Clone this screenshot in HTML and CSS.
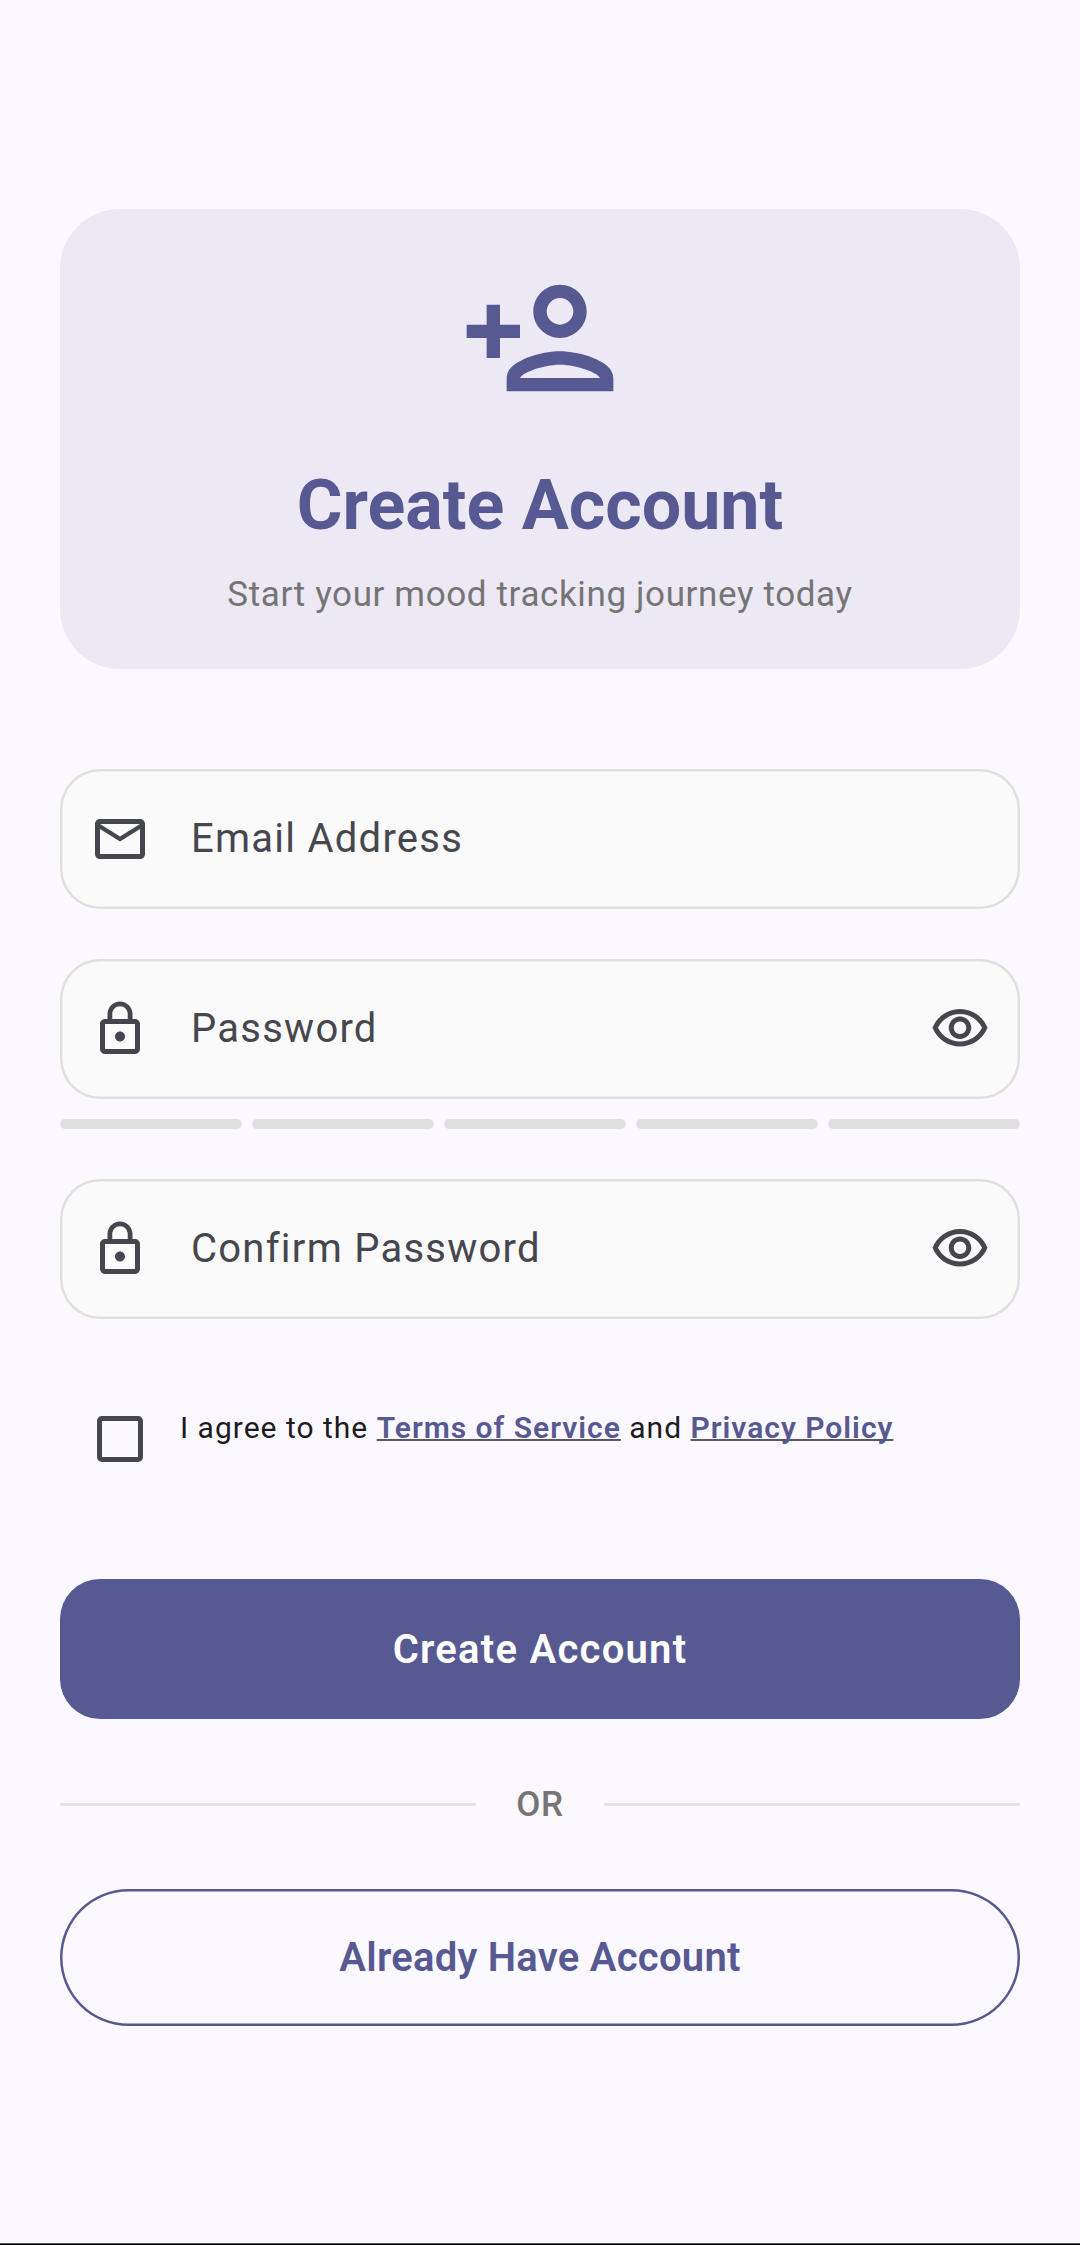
FILE: index.html
```html
<!DOCTYPE html>
<html lang="en">
<head>
<meta charset="utf-8">
<title>Create Account</title>
<link rel="stylesheet" href="styles.css">
</head>
<body>
<main class="screen">
  <header class="hero">
    <svg class="hero-icon" viewBox="0 0 24 24"><path fill-rule="evenodd" d="M15 12c2.21 0 4-1.79 4-4s-1.79-4-4-4-4 1.79-4 4 1.79 4 4 4zm0-6c1.1 0 2 .9 2 2s-.9 2-2 2-2-.9-2-2 .9-2 2-2zm0 8c-2.67 0-8 1.34-8 4v2h16v-2c0-2.66-5.33-4-8-4zm-6 4c.22-.72 3.31-2 6-2 2.7 0 5.8 1.29 6 2H9zM6 15v-3h3v-2H6V7H4v3H1v2h3v3z"/></svg>
    <h1 class="title">Create Account</h1>
    <p class="subtitle">Start your mood tracking journey today</p>
  </header>

  <form class="form">
    <div class="field">
      <svg class="icon" viewBox="0 0 24 24"><path d="M22 6c0-1.1-.9-2-2-2H4c-1.1 0-2 .9-2 2v12c0 1.1.9 2 2 2h16c1.1 0 2-.9 2-2V6zm-2 0l-8 5-8-5h16zm0 12H4V8l8 5 8-5v10z"/></svg>
      <span class="label">Email Address</span>
    </div>

    <div class="field password">
      <svg class="icon" viewBox="0 0 24 24"><path d="M12 17c1.1 0 2-.9 2-2s-.9-2-2-2-2 .9-2 2 .9 2 2 2zm6-9h-1V6c0-2.76-2.24-5-5-5S7 3.24 7 6v2H6c-1.1 0-2 .9-2 2v10c0 1.1.9 2 2 2h12c1.1 0 2-.9 2-2V10c0-1.1-.9-2-2-2zM8.9 6c0-1.71 1.39-3.1 3.1-3.1s3.1 1.39 3.1 3.1v2H8.9V6zM18 20H6V10h12v10z"/></svg>
      <span class="label">Password</span>
      <svg class="icon" viewBox="0 0 24 24"><path d="M12 6c3.79 0 7.17 2.13 8.82 5.5C19.17 14.87 15.79 17 12 17s-7.17-2.13-8.82-5.5C4.83 8.13 8.21 6 12 6m0-2C7 4 2.73 7.11 1 11.5 2.73 15.89 7 19 12 19s9.27-3.11 11-7.5C21.27 7.11 17 4 12 4zm0 5c1.38 0 2.5 1.12 2.5 2.5S13.38 14 12 14s-2.5-1.12-2.5-2.5S10.62 9 12 9m0-2c-2.48 0-4.5 2.02-4.5 4.5S9.52 16 12 16s4.5-2.02 4.5-4.5S14.48 7 12 7z"/></svg>
    </div>
    <div class="strength"><i></i><i></i><i></i><i></i><i></i></div>

    <div class="field confirm">
      <svg class="icon" viewBox="0 0 24 24"><path d="M12 17c1.1 0 2-.9 2-2s-.9-2-2-2-2 .9-2 2 .9 2 2 2zm6-9h-1V6c0-2.76-2.24-5-5-5S7 3.24 7 6v2H6c-1.1 0-2 .9-2 2v10c0 1.1.9 2 2 2h12c1.1 0 2-.9 2-2V10c0-1.1-.9-2-2-2zM8.9 6c0-1.71 1.39-3.1 3.1-3.1s3.1 1.39 3.1 3.1v2H8.9V6zM18 20H6V10h12v10z"/></svg>
      <span class="label">Confirm Password</span>
      <svg class="icon" viewBox="0 0 24 24"><path d="M12 6c3.79 0 7.17 2.13 8.82 5.5C19.17 14.87 15.79 17 12 17s-7.17-2.13-8.82-5.5C4.83 8.13 8.21 6 12 6m0-2C7 4 2.73 7.11 1 11.5 2.73 15.89 7 19 12 19s9.27-3.11 11-7.5C21.27 7.11 17 4 12 4zm0 5c1.38 0 2.5 1.12 2.5 2.5S13.38 14 12 14s-2.5-1.12-2.5-2.5S10.62 9 12 9m0-2c-2.48 0-4.5 2.02-4.5 4.5S9.52 16 12 16s4.5-2.02 4.5-4.5S14.48 7 12 7z"/></svg>
    </div>

    <div class="terms">
      <span class="checkbox" role="checkbox" aria-checked="false"></span>
      <p class="terms-text">I agree to the <a class="link">Terms of Service</a> and <a class="link">Privacy Policy</a></p>
    </div>

    <button class="btn primary" type="button">Create Account</button>
    <div class="divider"><span class="or">OR</span></div>
    <button class="btn outlined" type="button">Already Have Account</button>
  </form>
  <footer class="nav-edge"></footer>
</main>
</body>
</html>
```

FILE: styles.css
```css
* { box-sizing: border-box; }
body {
  margin: 0;
  background: #fbf8ff;
  font-family: Roboto, sans-serif;
}
.screen {
  display: flex;
  flex-direction: column;
  height: 2245px;
  padding: 209px 60px 0;
}
.hero {
  display: flex;
  flex-direction: column;
  align-items: center;
  height: 460px;
  padding-top: 49px;
  border-radius: 60px;
  background: #ece9f4;
}
.hero-icon { width: 160px; height: 160px; fill: #575992; }
.title {
  margin: 42px 0 0;
  font-size: 70px;
  line-height: 90px;
  font-weight: 700;
  color: #575992;
}
.subtitle {
  margin: 20px 0 0;
  font-size: 35px;
  line-height: 50px;
  letter-spacing: 0.625px;
  color: #757575;
}
.form { display: flex; flex-direction: column; margin-top: 100px; }
.field {
  display: flex;
  align-items: center;
  height: 140px;
  padding: 0 30px 1px;
  border-radius: 40px;
  background: #fafafa;
  box-shadow: inset 0 0 0 2.5px #e0e0e0;
}
.icon { width: 60px; height: 60px; fill: #46464f; }
.label {
  flex: 1;
  margin-left: 41px;
  font-size: 40px;
  line-height: 60px;
  letter-spacing: 1.25px;
  color: #46464f;
}
.password { margin-top: 50px; }
.strength { display: flex; margin-top: 20px; }
.strength i {
  width: 182px;
  height: 10px;
  margin-right: 10px;
  border-radius: 5px;
  background: #e0e0e0;
}
.strength i:last-child { width: 192px; margin-right: 0; }
.confirm { margin-top: 50px; }
.terms { display: flex; align-items: flex-start; height: 160px; margin-top: 60px; padding: 37px 0 0 37px; }
.checkbox {
  width: 46px;
  height: 46px;
  border: 5px solid #46464f;
  border-radius: 5px;
}
.terms-text {
  margin: -8px 0 0 37px;
  font-size: 30px;
  line-height: 40px;
  letter-spacing: 1px;
  color: #1b1b21;
}
.link {
  font-weight: 600;
  color: #575992;
  text-decoration: underline #5b5660 2px;
  text-decoration-skip-ink: none;
}
.btn {
  padding: 0;
  border: 0;
  font-family: inherit;
  font-size: 40px;
  font-weight: 600;
}
.primary {
  height: 140px;
  margin-top: 40px;
  border-radius: 40px;
  background: #575992;
  color: #fff;
  letter-spacing: 1.25px;
}
.divider { display: flex; align-items: center; gap: 40px; height: 50px; margin-top: 60px; }
.divider::before, .divider::after { content: ""; flex: 1; height: 3px; background: #e4e2e4; }
.or { font-size: 35px; font-weight: 500; color: #757575; letter-spacing: 0.625px; }
.outlined {
  height: 137px;
  margin-top: 60px;
  border-radius: 69px;
  background: none;
  box-shadow: inset 0 0 0 2.5px #575992;
  color: #575992;
  letter-spacing: 0.25px;
}
.nav-edge { height: 2px; margin: auto -60px 0; background: #000; border-top: 1px solid #555358; }
```
